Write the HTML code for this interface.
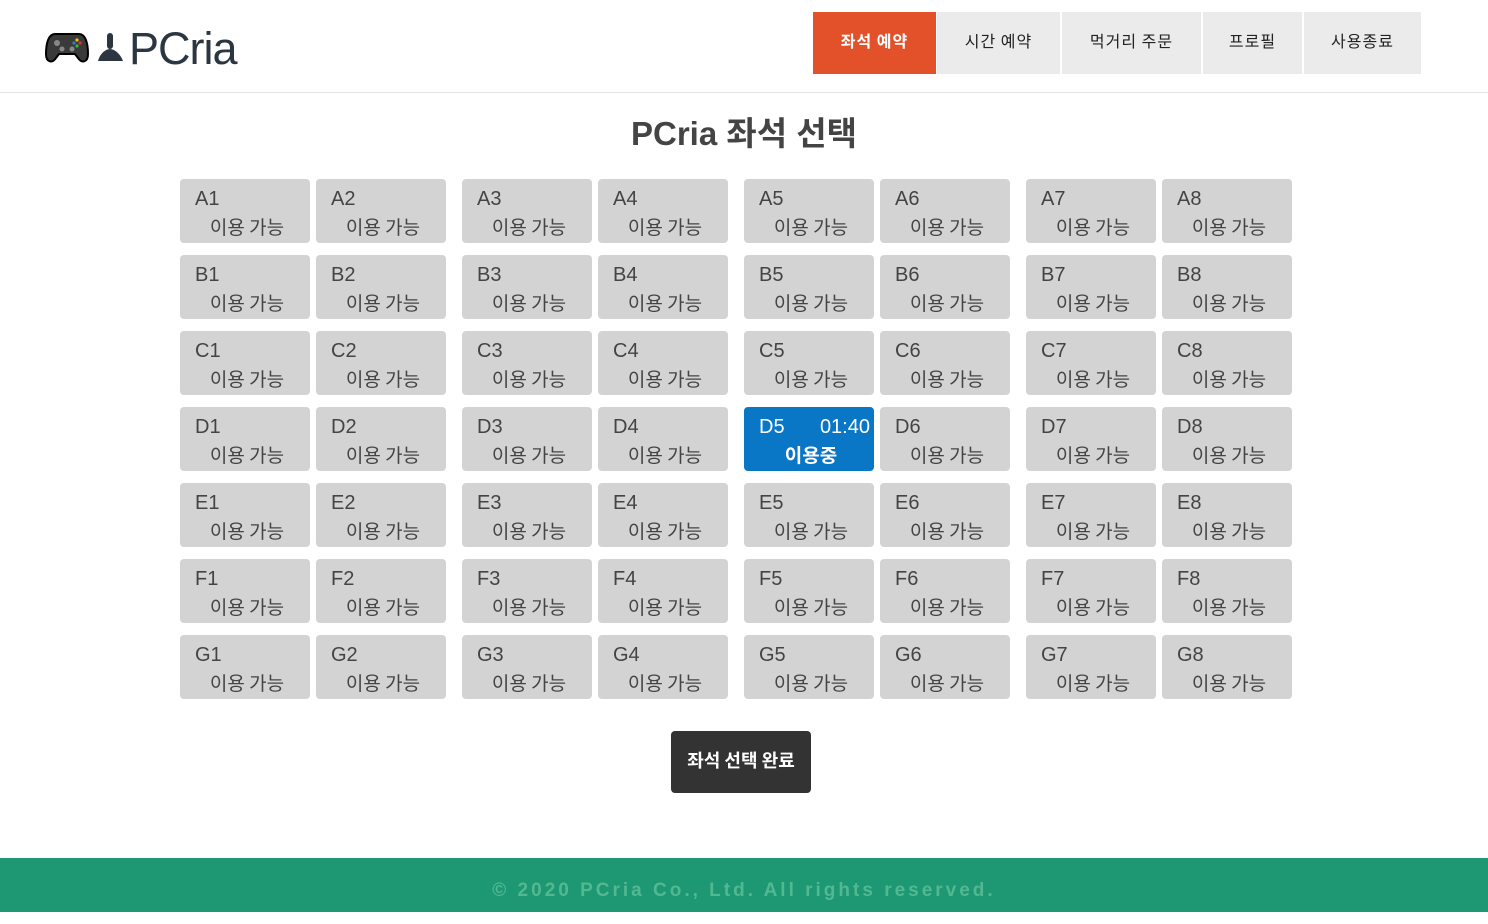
<!DOCTYPE html>
<html><head><meta charset="utf-8"><style>
*{margin:0;padding:0;box-sizing:border-box}
body{width:1488px;height:912px;position:relative;background:#fff;font-family:"Liberation Sans","Noto Sans CJK KR",sans-serif;overflow:hidden}
.hdr{position:absolute;left:0;top:0;width:1488px;height:93px;border-bottom:1px solid #e6e6e6}
.logo{position:absolute;left:129px;top:24px;font-size:45px;color:#2b3640;letter-spacing:-1px;line-height:50px}
.nav a{position:absolute;top:12px;height:62px;padding-bottom:6px;background:#ebebeb;color:#222;font-size:16px;display:flex;align-items:center;justify-content:center;letter-spacing:1px;font-family:"Noto Sans CJK KR",sans-serif}
.nav a.on{background:#e2512a;color:#fff;font-weight:bold}
h1{position:absolute;left:0;width:1488px;top:107px;text-align:center;font-size:33px;color:#444;font-weight:bold}
.s{position:absolute;width:130px;height:64px;background:#d3d3d3;border-radius:4px;color:#444}
.s .l{position:absolute;left:15px;top:9px;font-size:20px}
.s .tm{position:absolute;right:4px;top:9px;font-size:20px}
.s .t{position:absolute;left:2px;width:130px;top:36px;text-align:center;font-size:19px;font-family:"Noto Sans CJK KR",sans-serif;line-height:24px}
.s.u{background:#0a76c6;color:#fff}
.s.u .t{font-weight:bold}
.btn{position:absolute;left:671px;top:731px;width:140px;height:62px;background:#333;color:#fff;border-radius:4px;font-size:18px;font-weight:bold;display:flex;align-items:center;justify-content:center;font-family:"Noto Sans CJK KR",sans-serif;padding-bottom:4px}
.ft{position:absolute;left:0;top:858px;width:1488px;height:54px;background:#1d9872;color:#52b892;font-size:19px;font-weight:bold;letter-spacing:3px;text-align:center;line-height:66px}
</style></head><body>
<div class="hdr">
<svg style="position:absolute;left:45px;top:32px" width="44" height="32" viewBox="0 0 44 32"><path d="M10 2h24c6 0 9 8 9 20 0 8-6 10-10 4l-3-4H14l-3 4c-4 6-10 4-10-4C1 10 4 2 10 2z" fill="#3a3a3a" stroke="#000" stroke-width="2"/><circle cx="12" cy="11" r="3" fill="#888"/><circle cx="17" cy="17" r="2.5" fill="#888"/><circle cx="27" cy="17" r="2.5" fill="#888"/><circle cx="32" cy="8" r="1.6" fill="#f5c000"/><circle cx="29" cy="11" r="1.6" fill="#2a7fd0"/><circle cx="35" cy="11" r="1.6" fill="#d33"/><circle cx="32" cy="14" r="1.6" fill="#3b3"/></svg>
<svg style="position:absolute;left:97px;top:33px" width="28" height="30" viewBox="0 0 28 30"><rect x="10" y="0" width="6" height="16" rx="3" fill="#2b3640"/><path d="M1 28c2-8 8-12 12-12s10 4 13 12z" fill="#2b3640"/></svg>
<div class="logo">PCria</div>
<div class="nav">
<a class="on" style="left:813px;width:123px">좌석 예약</a>
<a style="left:937px;width:123px">시간 예약</a>
<a style="left:1062px;width:139px">먹거리 주문</a>
<a style="left:1203px;width:99px">프로필</a>
<a style="left:1304px;width:117px">사용종료</a>
</div></div>
<h1>PCria 좌석 선택</h1>
<div id="g"></div>
<div class="btn">좌석 선택 완료</div>
<div class="ft">© 2020 PCria Co., Ltd. All rights reserved.</div>
<script>
var xs=[180,316,462,598,744,880,1026,1162],rows="ABCDEFG",h="";
for(var r=0;r<7;r++)for(var c=0;c<8;c++){var y=179+r*76,n=rows[r]+(c+1);
if(n=="D5")h+='<div class="s u" style="left:'+xs[c]+'px;top:'+y+'px"><span class="l">D5</span><span class="tm">01:40</span><div class="t">이용중</div></div>';
else h+='<div class="s" style="left:'+xs[c]+'px;top:'+y+'px"><span class="l">'+n+'</span><div class="t">이용 가능</div></div>';}
document.getElementById("g").innerHTML=h;
</script>
</body></html>
